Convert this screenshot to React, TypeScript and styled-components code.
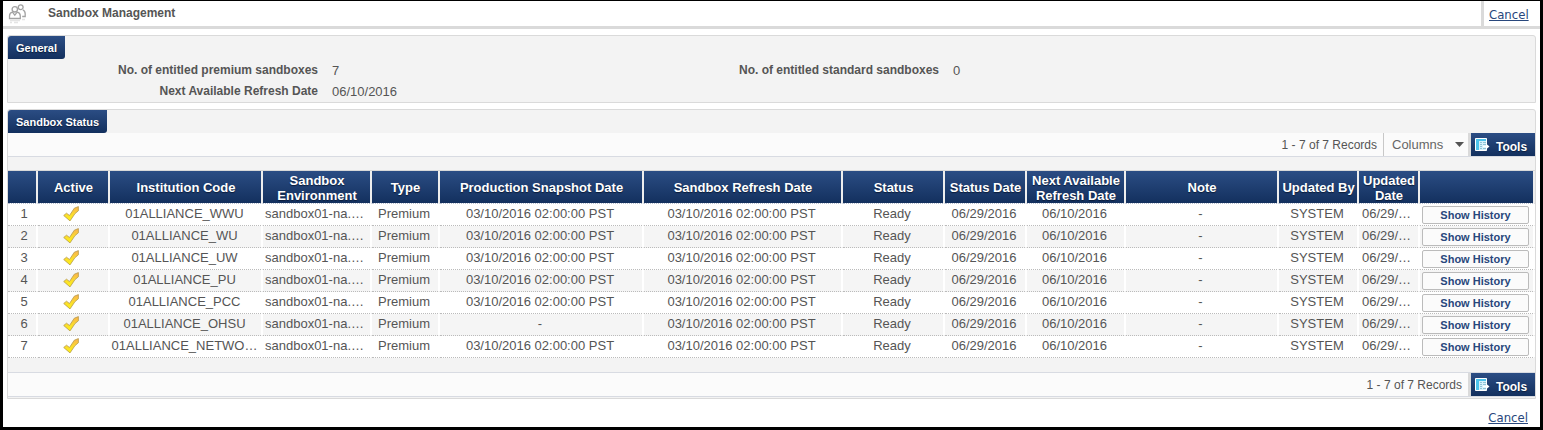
import React from 'react';
import styled, { createGlobalStyle, css } from 'styled-components';

const GlobalStyle = createGlobalStyle`
  * { box-sizing: border-box; }
  body {
    margin: 0;
    background: #fff;
    color: #555;
    font: 13px/16px "Liberation Sans", Arial, sans-serif;
  }
`;

const navy = css`
  background: linear-gradient(#2b4d84, #13305e);
  color: #fff;
  text-shadow: 0 1px 1px #0b1c3a;
`;

const Page = styled.div`
  border: 3px solid #000;
  border-top-width: 1px;
`;

const TitleBar = styled.header`
  display: flex;
  align-items: stretch;
  height: 28px;
  border-bottom: 3px solid #dadada;
`;

const TitleIcon = styled.svg`
  width: 20px;
  height: 20px;
  margin: 3px 20px 0 5px;
  flex: none;
`;

const Title = styled.h1`
  flex: 1;
  margin: 0;
  font-size: 12px;
  line-height: 24px;
`;

const TitleAction = styled.div`
  width: 59px;
  padding: 6px 0 0 5px;
  border-left: 3px solid #dadada;
`;

const Cancel = styled.a`
  color: #28477c;
  font: 13px/16px "DejaVu Sans Condensed", Tahoma, sans-serif;
  text-decoration: underline;
`;

const Main = styled.main`
  display: flex;
  flex-direction: column;
  gap: 6px;
  padding: 6px 4px 0;
`;

const Panel = styled.section`
  border: 1px solid #dadada;
  border-radius: 3px 3px 0 0;
  background: #f3f3f3;
`;

const PanelTitle = styled.h2`
  ${navy}
  width: fit-content;
  height: 23px;
  margin: 0;
  padding: 0 8px;
  border-radius: 3px 0 3px 0;
  font-size: 11px;
  line-height: 24px;
`;

const Facts = styled.dl`
  display: grid;
  grid-template-columns: 310fr 283fr 310fr 582fr;
  column-gap: 14px;
  margin: 0;
  padding-top: 1px;
  line-height: 21px;
`;

const FactName = styled.dt`
  font-size: 12px;
  font-weight: bold;
  text-align: right;
`;

const FactValue = styled.dd`
  margin: 0;
`;

const Toolbar = styled.div<{ $bottom?: boolean }>`
  display: flex;
  justify-content: flex-end;
  height: 24px;
  border-bottom: 1px solid #d8dbe2;
  background: #fbfbfb;
  font-size: 12px;
  line-height: 24px;
  ${p => p.$bottom && css`
    height: 25px;
    border-top: 1px solid #d8dbe2;
    margin-bottom: 1px;
  `}
`;

const RecordCount = styled.span`
  padding: 0 6px;
`;

const ColumnPicker = styled.label`
  display: flex;
  align-items: center;
  width: 85px;
  padding-right: 4px;
  border-left: 1px solid #c8c8c8;
`;

const ColumnSelect = styled.select`
  flex: 1;
  min-width: 0;
  height: 23px;
  padding: 0 0 0 8px;
  border: 0;
  appearance: none;
  background: transparent;
  color: #666;
  font: 13px/23px "Liberation Sans", Arial, sans-serif;
`;

const Arrow = styled.svg`
  width: 9px;
  height: 5px;
  flex: none;
`;

const ToolsButton = styled.button`
  ${navy}
  display: flex;
  align-items: center;
  gap: 6px;
  width: 67px;
  height: 23px;
  padding: 4px 0 0 4px;
  border: 0;
  border-left: 3px solid #dadada;
  background-clip: padding-box;
  font: bold 12px/16px "Liberation Sans", Arial, sans-serif;
`;

const ToolsGlyph = styled.svg`
  width: 15px;
  height: 15px;
  margin-bottom: 4px;
  flex: none;
`;

const TableArea = styled.div`
  padding: 13px 0 14px;
`;

const Grid = styled.table`
  width: 100%;
  table-layout: fixed;
  border-collapse: separate;
  border-spacing: 0;
  border-top: 1px solid #d8d8d8;
  background: #fff;
`;

const HeadCell = styled.th`
  ${navy}
  height: 33px;
  padding: 1px 0 0 1px;
  border-right: 2px solid #eee;
  border-bottom: 1px dotted #b8c0d0;
  background-clip: padding-box;
  line-height: 15px;
`;

const Row = styled.tr`
  &:nth-child(even) { background: #f5f5f5; }
`;

const Cell = styled.td`
  height: 22px;
  padding: 0 2px 2px 0;
  border-right: 2px solid #fff;
  border-bottom: 1px dotted #bbb;
  line-height: 19px;
  text-align: center;
  white-space: nowrap;
  overflow: hidden;
`;

const NumberCell = styled(Cell)`
  padding: 0 0 2px 4px;
`;

const ClippedCell = styled(Cell)`
  padding-right: 4px;
`;

const ActionCell = styled(Cell)`
  padding: 2px 4px 0 2px;
  vertical-align: top;
`;

const Check = styled.svg`
  display: block;
  width: 16px;
  height: 16px;
  margin: 1px auto 0 25px;
`;

const HistoryButton = styled.button`
  display: block;
  width: 100%;
  height: 18px;
  padding: 0;
  border: 1px solid #bbb;
  border-radius: 2px;
  background: #fbfbfb;
  color: #28477c;
  font: bold 11px/14px "Liberation Sans", Arial, sans-serif;
`;

const Footer = styled.footer`
  display: flex;
  justify-content: flex-end;
  padding: 11px 12px 1px;
`;

const columns: [string, number][] = [
  ['', 30], ['Active', 72], ['Institution Code', 153], ['Sandbox Environment', 109],
  ['Type', 68], ['Production Snapshot Date', 204], ['Sandbox Refresh Date', 199],
  ['Status', 102], ['Status Date', 82], ['Next Available Refresh Date', 99],
  ['Note', 153], ['Updated By', 80], ['Updated Date', 61], ['', 115],
];

const stamp = '03/10/2016 02:00:00 PST';

const rows = [
  { code: '01ALLIANCE_WWU', snapshot: stamp },
  { code: '01ALLIANCE_WU', snapshot: stamp },
  { code: '01ALLIANCE_UW', snapshot: stamp },
  { code: '01ALLIANCE_PU', snapshot: stamp },
  { code: '01ALLIANCE_PCC', snapshot: stamp },
  { code: '01ALLIANCE_OHSU', snapshot: '-' },
  { code: '01ALLIANCE_NETWO…', snapshot: stamp },
];

const Tools = () => (
  <ToolsButton type="button">
    <ToolsGlyph viewBox="0 0 15 15" aria-hidden="true">
      <path d="M.5 1.500h11v12H.5z" fill="#d5f1fb" stroke="#fff" />
      <path d="M1 2h10v2H1zM1 4h3v9H1z" fill="#4cc3ec" />
      <path d="M5 5.500h2M8 5.500h3M5 7.500h2M8 7.500h3M5 9.500h2M5 11.500h2M8 11.500h3" stroke="#8fc4d8" />
      <path d="M8 8.700h3.200V6.800l3.300 2.700-3.300 2.700v-1.900H8z" fill="#fff" />
    </ToolsGlyph>
    Tools
  </ToolsButton>
);

export default function App() {
  return (
    <Page>
      <GlobalStyle />
      <TitleBar>
        <TitleIcon viewBox="0 0 20 20" fill="none" stroke="#a3a3a3" strokeWidth="1.3" aria-hidden="true">
          <circle cx="12.700" cy="3.200" r="2.400" />
          <path d="M14.800 5.800c1.800.6 2.400 2 2.400 4.200v2.500h-3" />
          <circle cx="6.800" cy="5.300" r="2.700" fill="#fff" />
          <path d="M1.500 14.500v-2.600c0-2 1-3.200 3-3.700l2.300 3 2.300-3c2 .5 3.200 1.700 3.200 3.700v2.600z" fill="#fff" />
          <path d="M2 16.500h10M14 15.500h3M2 18.500h2M6 18.500h4" stroke="#e4e4e4" />
        </TitleIcon>
        <Title>Sandbox Management</Title>
        <TitleAction><Cancel href="#cancel">Cancel</Cancel></TitleAction>
      </TitleBar>
      <Main>
        <Panel>
          <PanelTitle>General</PanelTitle>
          <Facts>
            <FactName>No. of entitled premium sandboxes</FactName>
            <FactValue>7</FactValue>
            <FactName>No. of entitled standard sandboxes</FactName>
            <FactValue>0</FactValue>
            <FactName>Next Available Refresh Date</FactName>
            <FactValue>06/10/2016</FactValue>
          </Facts>
        </Panel>
        <Panel>
          <PanelTitle>Sandbox Status</PanelTitle>
          <Toolbar>
            <RecordCount>1 - 7 of 7 Records</RecordCount>
            <ColumnPicker>
              <ColumnSelect aria-label="Columns" defaultValue="columns">
                <option value="columns">Columns</option>
              </ColumnSelect>
              <Arrow viewBox="0 0 9 5" aria-hidden="true"><path d="M0 0h9L4.500 5z" fill="#555" /></Arrow>
            </ColumnPicker>
            <Tools />
          </Toolbar>
          <TableArea>
            <Grid>
              <colgroup>
                {columns.map(([, width], i) => <col key={i} width={width} />)}
              </colgroup>
              <thead>
                <tr>{columns.map(([name], i) => <HeadCell key={i} scope="col">{name}</HeadCell>)}</tr>
              </thead>
              <tbody>
                {rows.map((row, i) => (
                  <Row key={row.code}>
                    <NumberCell>{i + 1}</NumberCell>
                    <Cell>
                      <Check viewBox="0 0 16 16" role="img" aria-label="Active">
                        <defs>
                          <linearGradient id="gold" x1="0" y1="1" x2="0" y2="0">
                            <stop offset="0" stopColor="#fdf414" />
                            <stop offset=".45" stopColor="#fbdc2c" />
                            <stop offset="1" stopColor="#f9ae50" />
                          </linearGradient>
                        </defs>
                        <path d="M.7 9.500l2.800-2.300 3 2.300 4.800-7.300L15.400.6v4.200L12 7.600l-5 7.300z" fill="url(#gold)" stroke="#b59a4c" strokeWidth=".8" strokeLinejoin="round" />
                      </Check>
                    </Cell>
                    <Cell>{row.code}</Cell>
                    <ClippedCell>sandbox01-na.…</ClippedCell>
                    <Cell>Premium</Cell>
                    <Cell>{row.snapshot}</Cell>
                    <Cell>{stamp}</Cell>
                    <Cell>Ready</Cell>
                    <Cell>06/29/2016</Cell>
                    <Cell>06/10/2016</Cell>
                    <Cell>-</Cell>
                    <Cell>SYSTEM</Cell>
                    <ClippedCell>06/29/…</ClippedCell>
                    <ActionCell><HistoryButton type="button">Show History</HistoryButton></ActionCell>
                  </Row>
                ))}
              </tbody>
            </Grid>
          </TableArea>
          <Toolbar $bottom>
            <RecordCount>1 - 7 of 7 Records</RecordCount>
            <Tools />
          </Toolbar>
        </Panel>
      </Main>
      <Footer><Cancel href="#cancel">Cancel</Cancel></Footer>
    </Page>
  );
}
